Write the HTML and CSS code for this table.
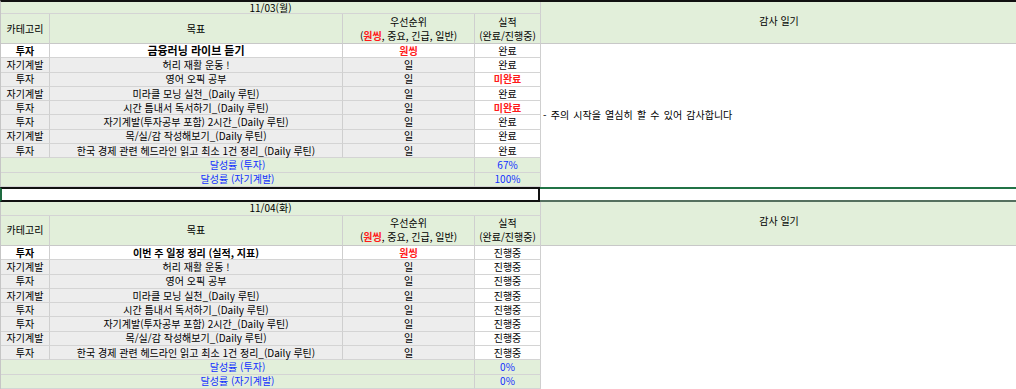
FILE: index.html
```html
<!DOCTYPE html>
<html lang="ko">
<head>
<meta charset="utf-8">
<title>감사 일기</title>
<link rel="stylesheet" href="styles.css">
</head>
<body>
<div class="sheet">
  <section class="day day-first">
    <div class="cell date span4">11/03(월)</div>
    <div class="cell diary-head">감사 일기</div>
    <div class="cell head">카테고리</div>
    <div class="cell head">목표</div>
    <div class="cell head two"><span>우선순위</span><span>(<b class="red">원씽</b>, 중요, 긴급, 일반)</span></div>
    <div class="cell head two"><span>실적</span><span>(완료/진행중)</span></div>

    <div class="cell white bold">투자</div>
    <div class="cell white bold big">금융러닝 라이브 듣기</div>
    <div class="cell white bold red">원씽</div>
    <div class="cell white">완료</div>
    <div class="cell diary-body">- 주의 시작을 열심히 할 수 있어 감사합니다</div>

    <div class="cell gray">자기계발</div>
    <div class="cell gray">허리 재활 운동 !</div>
    <div class="cell gray">일</div>
    <div class="cell white">완료</div>

    <div class="cell gray">투자</div>
    <div class="cell gray">영어 오픽 공부</div>
    <div class="cell gray">일</div>
    <div class="cell white bold red">미완료</div>

    <div class="cell gray">자기계발</div>
    <div class="cell gray">미라클 모닝 실천_(Daily 루틴)</div>
    <div class="cell gray">일</div>
    <div class="cell white">완료</div>

    <div class="cell gray">투자</div>
    <div class="cell gray">시간 틈내서 독서하기_(Daily 루틴)</div>
    <div class="cell gray">일</div>
    <div class="cell white bold red">미완료</div>

    <div class="cell gray">투자</div>
    <div class="cell gray">자기계발(투자공부 포함) 2시간_(Daily 루틴)</div>
    <div class="cell gray">일</div>
    <div class="cell white">완료</div>

    <div class="cell gray">자기계발</div>
    <div class="cell gray">목/실/감 작성해보기_(Daily 루틴)</div>
    <div class="cell gray">일</div>
    <div class="cell white">완료</div>

    <div class="cell gray">투자</div>
    <div class="cell gray">한국 경제 관련 헤드라인 읽고 최소 1건 정리_(Daily 루틴)</div>
    <div class="cell gray">일</div>
    <div class="cell white">완료</div>

    <div class="cell sum span3">달성률 (투자)</div>
    <div class="cell sum">67%</div>
    <div class="cell sum span3">달성률 (자기계발)</div>
    <div class="cell sum">100%</div>
  </section>

  <div class="gap">
    <div class="gap-left"></div>
    <div class="gap-right"></div>
  </div>

  <section class="day day-second">
    <div class="cell date span4">11/04(화)</div>
    <div class="cell diary-head">감사 일기</div>
    <div class="cell head">카테고리</div>
    <div class="cell head">목표</div>
    <div class="cell head two"><span>우선순위</span><span>(<b class="red">원씽</b>, 중요, 긴급, 일반)</span></div>
    <div class="cell head two"><span>실적</span><span>(완료/진행중)</span></div>

    <div class="cell white bold">투자</div>
    <div class="cell white bold">이번 주 일정 정리 (실적, 지표)</div>
    <div class="cell white bold red">원씽</div>
    <div class="cell white">진행중</div>
    <div class="cell diary-body"></div>

    <div class="cell gray">자기계발</div>
    <div class="cell gray">허리 재활 운동 !</div>
    <div class="cell gray">일</div>
    <div class="cell white">진행중</div>

    <div class="cell gray">투자</div>
    <div class="cell gray">영어 오픽 공부</div>
    <div class="cell gray">일</div>
    <div class="cell white">진행중</div>

    <div class="cell gray">자기계발</div>
    <div class="cell gray">미라클 모닝 실천_(Daily 루틴)</div>
    <div class="cell gray">일</div>
    <div class="cell white">진행중</div>

    <div class="cell gray">투자</div>
    <div class="cell gray">시간 틈내서 독서하기_(Daily 루틴)</div>
    <div class="cell gray">일</div>
    <div class="cell white">진행중</div>

    <div class="cell gray">투자</div>
    <div class="cell gray">자기계발(투자공부 포함) 2시간_(Daily 루틴)</div>
    <div class="cell gray">일</div>
    <div class="cell white">진행중</div>

    <div class="cell gray">자기계발</div>
    <div class="cell gray">목/실/감 작성해보기_(Daily 루틴)</div>
    <div class="cell gray">일</div>
    <div class="cell white">진행중</div>

    <div class="cell gray">투자</div>
    <div class="cell gray">한국 경제 관련 헤드라인 읽고 최소 1건 정리_(Daily 루틴)</div>
    <div class="cell gray">일</div>
    <div class="cell white">진행중</div>

    <div class="cell sum span3">달성률 (투자)</div>
    <div class="cell sum">0%</div>
    <div class="cell sum span3">달성률 (자기계발)</div>
    <div class="cell sum">0%</div>
  </section>
</div>
</body>
</html>
```

FILE: styles.css
```css
* { box-sizing: border-box; }

html, body {
  margin: 0;
  padding: 0;
  background: #ffffff;
}

body {
  font-family: "Noto Sans CJK KR", "Noto Sans", sans-serif;
  font-size: 10px;
  color: #000;
  width: 1016px;
  height: 389px;
  overflow: hidden;
}

.sheet {
  display: flex;
  flex-direction: column;
}

.day {
  display: grid;
  grid-template-columns: 49px 293px 132px 66px 476px;
  border-left: 1px solid #c6c6c6;
}

.day-first {
  border-top: 2px solid #111;
  grid-template-rows: 12px 30px repeat(10, 14.3px);
}

.day-second {
  grid-template-rows: 14px 30px repeat(10, 14.3px);
}

.cell {
  display: flex;
  align-items: center;
  justify-content: center;
  white-space: nowrap;
  overflow: visible;
  line-height: 1;
  border-right: 1px solid #cfcfcf;
  border-bottom: 1px solid #d4d4d4;
}

.span4 { grid-column: 1 / span 4; }
.span3 { grid-column: 1 / span 3; }

.date {
  background: #e2efda;
}

.diary-head {
  grid-column: 5;
  grid-row: 1 / span 2;
  background: #e2efda;
  border-right: none;
  border-bottom: 1px solid #c8c8c8;
  padding-bottom: 4px;
}

.head {
  background: #e2efda;
  border-bottom: 1px solid #c8c8c8;
}

.two {
  flex-direction: column;
  gap: 4px;
}

.diary-body {
  grid-column: 5;
  grid-row: 3 / span 10;
  justify-content: flex-start;
  padding-left: 2px;
  word-spacing: 1.4px;
  border-right: none;
  border-bottom: none;
  background: #fff;
}

.white { background: #ffffff; }
.gray { background: #ededed; }

.bold { font-weight: 700; }
.big { font-size: 11px; }
.red { color: #ff1a1a; font-weight: 700; }

.sum {
  background: #e2efda;
  color: #1030ff;
}

.gap {
  display: flex;
  height: 15px;
}

.gap-left {
  width: 540px;
  border-top: 2px solid #111;
  border-bottom: 2px solid #111;
  border-left: 2px solid #1e6b40;
  border-right: 2px solid #111;
}

.gap-right {
  flex: 1;
  border-top: 2px solid #217346;
  border-bottom: 2px solid #55705f;
}
```
